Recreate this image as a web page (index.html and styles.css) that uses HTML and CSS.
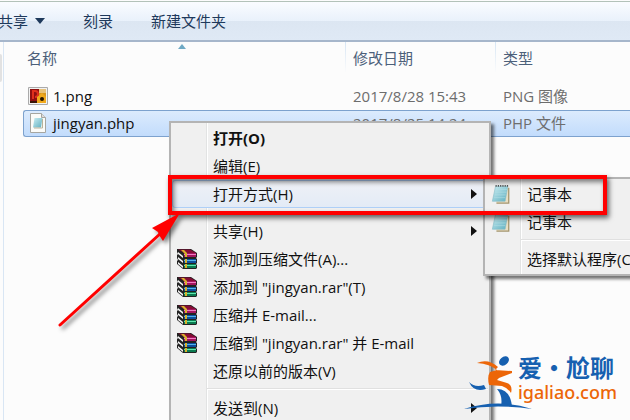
FILE: index.html
```html
<!DOCTYPE html>
<html lang="zh-CN">
  <head>
    <meta charset="utf-8">
    <title>jingyan</title>
    <link rel="stylesheet" href="styles.css">
  </head>
  <body>
    <svg class="defs" width="0" height="0" aria-hidden="true">
      <defs>
        <linearGradient id="page" x1="0" y1="0" x2="1" y2="1">
          <stop offset="0" stop-color="#c9edf2"/>
          <stop offset="1" stop-color="#5fafc0"/>
        </linearGradient>
        <symbol id="notepad" viewBox="0 0 20 22">
          <path d="M5 4h13.500v17H5z" fill="#e9dfc4"/>
          <path d="M18.500 4v17H5" fill="none" stroke="#a5966f" stroke-width="1.400"/>
          <path d="M4 2.500h13.500L14.500 19H.5z" fill="url(#page)" stroke="#86bcc8" stroke-width=".7"/>
          <path d="M4.500 6h12M4 9h12M3 12h12M2.500 15h12" stroke="#b5dfe6" stroke-width=".6"/>
          <path d="M4 2h14" stroke="#555" stroke-width="2" stroke-dasharray="1.300 1.200"/>
        </symbol>
        <symbol id="rar" viewBox="0 0 20 20">
          <path d="M0 0h14l6 4v4l-1 1 1 1v4l-1 1 1 1v3l-1 1H6L0 15v-3l1-1-1-2V6l1-1-1-2z" fill="#222"/>
          <path d="M1 .5h12l6 3.500H7z" fill="#860b35"/>
          <path d="M7 4h12v4H7z" fill="#a3145f"/>
          <path d="M7 5h12v1H7z" fill="#f07cc0"/>
          <path d="M1 3l5 4v2L1 5zM1 8l5 4v2l-5-4zM1 13l5 4v2l-5-4z" fill="#f4f4f4"/>
          <path d="M7 10h12v4H7z" fill="#0b4f9c"/>
          <path d="M7 11h12v1H7z" fill="#55b0e8"/>
          <path d="M7 15h12v4H7z" fill="#0b7a50"/>
          <path d="M7 16h12v1H7z" fill="#5fe6ae"/>
          <path d="M4 1h3l3 3v4H8V5zM8 10h2v4H8zM8 15h2v4H8z" fill="#d8b22c"/>
        </symbol>
      </defs>
    </svg>

    <div class="explorer">
      <div class="toolbar">
        <button class="tool">共享<span class="caret"></span></button>
        <button class="tool">刻录</button>
        <button class="tool">新建文件夹</button>
      </div>
      <div class="content">
        <div class="sidebar"><div class="thumb"></div></div>
        <table class="files">
          <thead>
            <tr>
              <th class="name">名称<span class="sort"></span></th>
              <th class="date">修改日期</th>
              <th>类型</th>
            </tr>
          </thead>
          <tbody>
            <tr>
              <td class="name">
                <div class="file">
                  <svg width="20" height="18" viewBox="0 0 20 18">
                    <path d="M.5.500h19v17H.5z" fill="#f2f2f2" stroke="#aaa"/>
                    <path d="M2 2h16v14H2z" fill="#d9971c"/>
                    <path d="M2 2h9v12H2z" fill="#8f1010"/>
                    <path d="M5 12V4h2q3 0 3 3t-3 3" fill="none" stroke="#e0301c" stroke-width="2"/>
                    <path d="M11 2h7v4h-7z" fill="#e8c27a"/>
                    <path d="M9 10l5-4 4 4v6H9z" fill="#f1a91c"/>
                    <path d="M2 14h7v2H2z" fill="#3c1406"/>
                    <circle cx="14" cy="12" r="2" fill="#251500"/>
                  </svg>
                  1.png
                </div>
              </td>
              <td class="date">2017/8/28 15:43</td>
              <td>PNG 图像</td>
            </tr>
            <tr class="selected">
              <td class="name">
                <div class="file">
                  <svg width="20" height="20" viewBox="0 0 20 20">
                    <path d="M2.500.500h11l4 4v15h-15z" fill="#fbfbf8" stroke="#a6a6a0"/>
                    <path d="M13.500.500v4h4" fill="#ddd" stroke="#a6a6a0"/>
                    <path d="M6.500 5h8l-1.500 9.500H5z" fill="url(#page)"/>
                    <path d="M14.500 6v9H6" fill="none" stroke="#b9b39b"/>
                  </svg>
                  jingyan.php
                </div>
              </td>
              <td class="date">2017/8/25 14:24</td>
              <td>PHP 文件</td>
            </tr>
          </tbody>
        </table>
      </div>

      <div class="menu context">
        <button class="item default"><span class="icon"></span>打开(O)</button>
        <button class="item"><span class="icon"></span>编辑(E)</button>
        <button class="item hover"><span class="icon"></span>打开方式(H)<span class="more"></span></button>
        <div class="separator"></div>
        <button class="item"><span class="icon"></span>共享(H)<span class="more"></span></button>
        <button class="item"><svg class="icon"><use href="#rar"/></svg>添加到压缩文件(A)...</button>
        <button class="item"><svg class="icon"><use href="#rar"/></svg>添加到 "jingyan.rar"(T)</button>
        <button class="item"><svg class="icon"><use href="#rar"/></svg>压缩并 E-mail...</button>
        <button class="item"><svg class="icon"><use href="#rar"/></svg>压缩到 "jingyan.rar" 并 E-mail</button>
        <button class="item"><span class="icon"></span>还原以前的版本(V)</button>
        <div class="separator"></div>
        <button class="item"><span class="icon"></span>发送到(N)<span class="more"></span></button>
      </div>

      <div class="menu submenu">
        <button class="item"><svg class="icon"><use href="#notepad"/></svg>记事本</button>
        <button class="item"><svg class="icon"><use href="#notepad"/></svg>记事本</button>
        <div class="separator"></div>
        <button class="item"><span class="icon"></span>选择默认程序(C)...</button>
      </div>

      <div class="highlight"></div>
      <svg class="arrow" width="130" height="124" viewBox="0 0 130 124">
        <path d="M5 115L106 23" stroke="#f00" stroke-width="3" stroke-linecap="round"/>
        <path d="M125 3L97 18l6 4 1 3 4 6z" fill="#f00"/>
      </svg>

      <div class="logo">
        <svg width="70" height="56" viewBox="0 0 70 56">
          <ellipse cx="40" cy="6" rx="5.500" ry="4" transform="rotate(-40 40 6)" fill="#1660b0"/>
          <path d="M13 8q11-5 21 4l-3 3 17 1v2l-13 5-2 2 10 3q6 2 4 10-3-5-9-7l-13-1q-2-9 1-13l7-2Q26 9 13 8z" fill="#ec6608"/>
          <path d="M5 27q6 6 15 3l2 4Q10 38 5 27z" fill="#1660b0"/>
          <path d="M33 34q13 0 15 17H37q2-10-4-17z" fill="#1660b0"/>
          <path d="M0 54Q34 43 68 54 34 49 0 54z" fill="#1660b0"/>
        </svg>
        <div>
          <div class="brand">爱·尬聊</div>
          <div class="site">igaliao.com</div>
        </div>
      </div>
    </div>
  </body>
</html>
```

FILE: styles.css
```css
body {
    margin: 0;
    font: 15px/20px "Open Sans", "Noto Sans CJK SC", sans-serif;
    color: #111;
}
button {
    font: inherit;
    color: inherit;
    border: none;
    background: none;
    padding: 0;
}
.defs {
    position: absolute;
}
.explorer {
    position: relative;
    height: 100vh;
    overflow: hidden;
    display: flex;
    flex-direction: column;
    background: #fcfcfc;
}
.toolbar {
    display: flex;
    align-items: center;
    gap: 38px;
    height: 38px;
    margin-top: 1px;
    border-top: 1px solid #b3c2b9;
    border-bottom: 2px solid #a6b6cb;
    background: linear-gradient(to bottom, #fafcff, #e9f1fb 50%, #dce6f2 50%, #dfe9f5);
}
.tool {
    display: flex;
    align-items: center;
    gap: 7px;
    color: #1e395b;
}
.tool:first-child {
    margin-left: -2px;
}
.caret {
    border: 5px solid transparent;
    border-top: 6px solid #1e395b;
    border-bottom: none;
}
.content {
    flex: 1;
    display: flex;
    align-items: stretch;
}
.sidebar {
    width: 3px;
    margin-right: 19px;
    padding-top: 12px;
    border-right: 1px solid #d9e6f4;
}
.thumb {
    width: 2px;
    height: 28px;
    background: #e2e2e2;
    border-radius: 0 2px 2px 0;
}

/* file list */
.files {
    flex: 1;
    align-self: flex-start;
    border-spacing: 0;
    table-layout: fixed;
    color: #6d6d6d;
}
.files th {
    height: 30px;
    padding: 2px 8px 0 7px;
    box-sizing: border-box;
    font-weight: normal;
    text-align: left;
    color: #4c607a;
    border-left: 1px solid;
    border-image: linear-gradient(to bottom, #d5e4f3, #fcfcfc) 1;
}
.files th.name {
    position: relative;
    padding-left: 3px;
    border-left-color: transparent;
    border-image: none;
}
.files tbody:before {
    content: "";
    display: block;
    height: 11px;
}
.files td {
    height: 23px;
    padding: 0 8px 2px;
    border-top: 1px solid transparent;
    border-bottom: 1px solid transparent;
}
.name {
    width: 309px;
}
.files .date {
    width: 134px;
}
.files td.name {
    padding-left: 4px;
    color: #111;
    border-left: 1px solid transparent;
}
.files .selected td {
    background: linear-gradient(to bottom, #dcebfd, #c2dcfc);
    border-color: #7da2ce;
}
.files .selected td.name {
    border-radius: 3px 0 0 3px;
}
.file {
    display: flex;
    align-items: center;
    gap: 5px;
}
.sort {
    position: absolute;
    left: 154px;
    top: 2px;
    border: 4px solid transparent;
    border-top: none;
    border-bottom: 5px solid #6fa9c4;
}

/* menus */
.menu {
    position: absolute;
    box-sizing: border-box;
    padding: 1px;
    border: 2px solid #b4b4b4;
    background: linear-gradient(to right, #f0f0f0 35px, #e2e3e3 35px, #e2e3e3 36px, #fff 36px, #fff 37px, #f0f0f0 37px);
    box-shadow: 3px 3px 3px rgba(0, 0, 0, .55);
}
.context {
    left: 169px;
    top: 121px;
    width: 322px;
}
.submenu {
    left: 483px;
    top: 177px;
    width: 220px;
}
.item {
    display: flex;
    align-items: center;
    box-sizing: border-box;
    width: 100%;
    height: 28px;
    padding: 0 10px 0 4px;
    border: 1px solid transparent;
    border-radius: 3px;
    white-space: nowrap;
}
.default {
    font-weight: bold;
}
.hover {
    border-color: #aecff7;
    background: linear-gradient(to bottom, #eff1f6, #e3ebf6);
}
.icon {
    flex: none;
    width: 20px;
    height: 20px;
    margin-right: 16px;
}
.more {
    margin-left: auto;
    border: 5px solid transparent;
    border-left: 6px solid #111;
    border-right: none;
}
.separator {
    height: 2px;
    margin: 3px 0 4px 35px;
    background: linear-gradient(to bottom, #e0e0e0 50%, #fff 50%);
}

/* red marks over the menus */
.highlight {
    position: absolute;
    left: 168px;
    top: 175px;
    width: 431px;
    height: 32px;
    border: 4px solid #f00;
    box-shadow: 2px 3px 5px rgba(0, 0, 0, .6), inset 2px 3px 5px rgba(0, 0, 0, .5);
}
.arrow {
    position: absolute;
    left: 55px;
    top: 210px;
    filter: drop-shadow(3px 3px 2px rgba(0, 0, 0, .5));
}
.logo {
    position: absolute;
    right: 13px;
    bottom: 9px;
    display: flex;
    align-items: flex-start;
}
.logo svg {
    margin-top: 3px;
    margin-right: -16px;
}
.brand {
    font: bold 24px/30px "Noto Sans CJK SC", sans-serif;
    color: #1660b0;
}
.site {
    font: 500 18px/20px "Noto Sans", sans-serif;
    color: #ec6608;
}
```
